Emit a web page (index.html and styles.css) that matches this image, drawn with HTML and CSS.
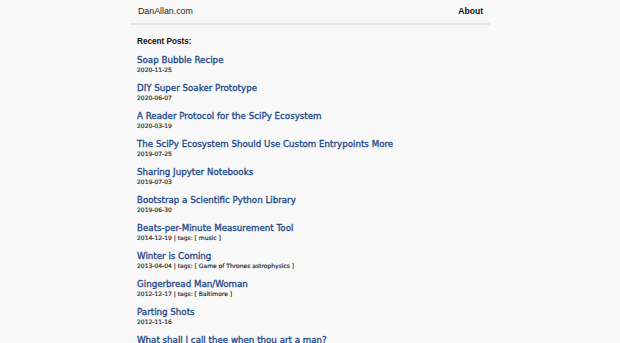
FILE: index.html
```html
<!DOCTYPE html>
<html lang="en">
<head>
  <meta charset="UTF-8" />
  <title>DanAllan.com</title>
  <link rel="stylesheet" href="styles.css">
</head>
<body>

<div class="page">
  <header class="masthead">
    <a class="brand" href="#">DanAllan.com</a>
    <a class="nav" href="#">About</a>
  </header>

  <h3 class="heading">Recent Posts:</h3>

  <ul class="posts">
    <li>
      <a href="#">Soap Bubble Recipe</a>
      <div class="meta">2020-11-25</div>
    </li>
    <li>
      <a href="#">DIY Super Soaker Prototype</a>
      <div class="meta">2020-06-07</div>
    </li>
    <li>
      <a href="#">A Reader Protocol for the SciPy Ecosystem</a>
      <div class="meta">2020-03-19</div>
    </li>
    <li>
      <a href="#">The SciPy Ecosystem Should Use Custom Entrypoints More</a>
      <div class="meta">2019-07-25</div>
    </li>
    <li>
      <a href="#">Sharing Jupyter Notebooks</a>
      <div class="meta">2019-07-03</div>
    </li>
    <li>
      <a href="#">Bootstrap a Scientific Python Library</a>
      <div class="meta">2019-06-30</div>
    </li>
    <li>
      <a href="#">Beats-per-Minute Measurement Tool</a>
      <div class="meta">2014-12-19 | tags: [ music ]</div>
    </li>
    <li>
      <a href="#">Winter is Coming</a>
      <div class="meta">2013-04-04 | tags: [ Game of Thrones astrophysics ]</div>
    </li>
    <li>
      <a href="#">Gingerbread Man/Woman</a>
      <div class="meta">2012-12-17 | tags: [ Baltimore ]</div>
    </li>
    <li>
      <a href="#">Parting Shots</a>
      <div class="meta">2012-11-16</div>
    </li>
    <li>
      <a href="#">What shall I call thee when thou art a man?</a>
      <div class="meta">2012-10-02</div>
    </li>
  </ul>
</div>

</body>
</html>
```

FILE: styles.css
```css
body {
  margin: 0;
  background: #f8f8f8;
  font-family: "DejaVu Sans", Verdana, sans-serif;
  color: #333;
}

a {
  text-decoration: none;
}

.page {
  width: 360px;
  margin: 0 auto;
}

.masthead {
  display: flex;
  justify-content: space-between;
  align-items: center;
  height: 21px;
  padding: 0 7px 2px 8px;
  border-bottom: 2px solid #e6e6e6;
  font-family: "Liberation Sans", Arial, sans-serif;
}

.brand {
  color: #222;
  font-size: 8.8px;
}

.nav {
  color: #111;
  font-size: 8.6px;
  font-weight: bold;
}

.heading {
  margin: 12px 0 0 7px;
  font-family: "Liberation Sans", Arial, sans-serif;
  font-size: 8.2px;
  font-weight: bold;
  color: #111;
}

.posts {
  list-style: none;
  margin: 8px 0 0 7px;
  padding: 0;
}

.posts li {
  height: 28px;
}

.posts a {
  display: block;
  color: #1d4886;
  font-size: 8.7px;
  line-height: 12px;
  -webkit-text-stroke: 0.3px #1d4886;
}

.meta {
  font-size: 6px;
  line-height: 8px;
  color: #222;
  -webkit-text-stroke: 0.15px #222;
}
```
